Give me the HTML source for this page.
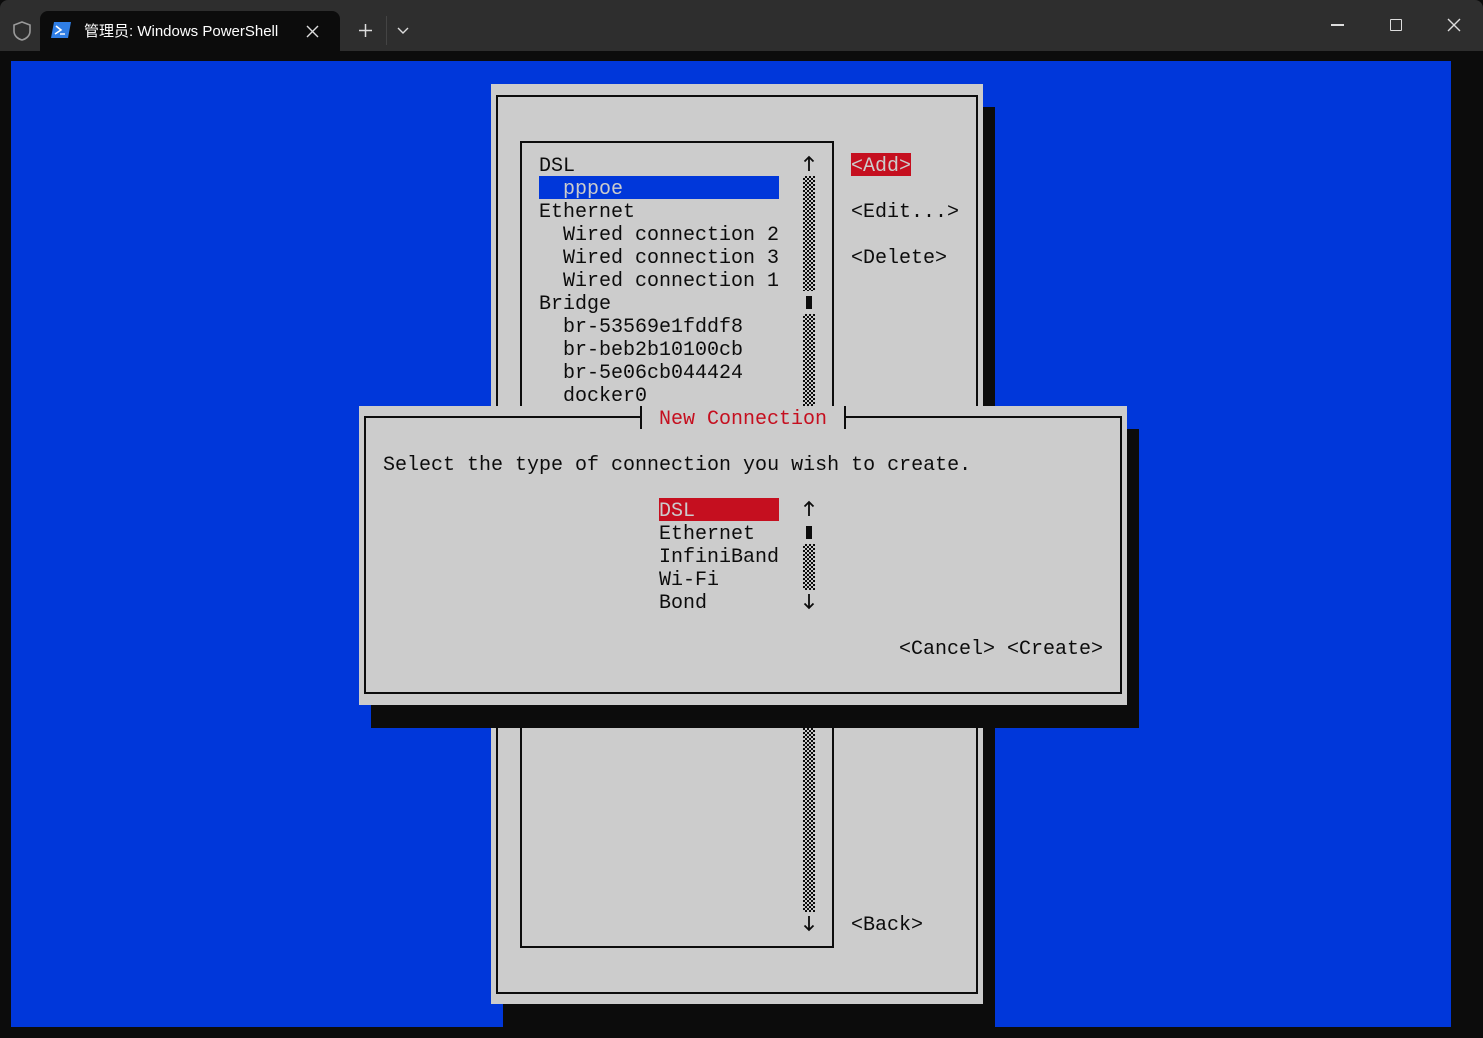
<!DOCTYPE html>
<html><head><meta charset="utf-8">
<style>
*{margin:0;padding:0;box-sizing:border-box}
html,body{width:1483px;height:1038px;overflow:hidden;background:#0c0c0c}
.a{position:absolute}
.t{position:absolute;font-family:"Liberation Mono",monospace;font-size:20px;line-height:23px;height:23px;white-space:pre;color:#0c0c0c;padding-top:2px}
.sh{position:absolute;background:repeating-conic-gradient(#0c0c0c 0 25%,#cccccc 0 50%) 0 0/4px 4px}
.ar{position:absolute;left:803px;width:12px;height:23px}
</style></head><body>
<div class="a" style="left:0;top:0;width:1483px;height:51px;background:#2e2e2e;border-radius:8px 8px 0 0"></div>
<div class="a" style="left:40px;top:11px;width:300px;height:42px;background:#0c0c0c;border-radius:8px 8px 0 0"></div>
<svg class="a" style="left:11px;top:20px" width="22" height="22" viewBox="0 0 22 22"><path d="M11 2 L19 5 V11 C19 16 15 19 11 20 C7 19 3 16 3 11 V5 Z" fill="none" stroke="#9a9a9a" stroke-width="1.6"/></svg>
<svg class="a" style="left:51px;top:22px" width="20" height="16" viewBox="0 0 20 16"><path d="M3 0 H20 L17 16 H0 Z" fill="#2f7ee6"/><path d="M5 4 L10 8 L4 12" fill="none" stroke="#fff" stroke-width="1.6"/><path d="M9 12 H14" stroke="#fff" stroke-width="1.4"/></svg>
<div class="a" style="left:84px;top:22px;font-family:'Liberation Sans','Noto Sans CJK SC',sans-serif;font-size:15px;color:#fff;line-height:20px">管理员: Windows PowerShell</div>
<svg class="a" style="left:306px;top:25px" width="13" height="13" viewBox="0 0 13 13"><path d="M1 1L12 12M12 1L1 12" stroke="#ddd" stroke-width="1.4"/></svg>
<svg class="a" style="left:358px;top:23px" width="15" height="15" viewBox="0 0 15 15"><path d="M7.5 1V14M1 7.5H14" stroke="#ddd" stroke-width="1.5"/></svg>
<div class="a" style="left:386px;top:16px;width:1px;height:29px;background:#444"></div>
<svg class="a" style="left:397px;top:27px" width="12" height="8" viewBox="0 0 12 8"><path d="M1 1L6 6L11 1" fill="none" stroke="#ddd" stroke-width="1.4"/></svg>
<div class="a" style="left:1331px;top:24px;width:13px;height:1.5px;background:#ddd"></div>
<div class="a" style="left:1390px;top:19px;width:12px;height:12px;border:1.5px solid #ddd;border-radius:1px"></div>
<svg class="a" style="left:1447px;top:18px" width="14" height="14" viewBox="0 0 14 14"><path d="M1 1L13 13M13 1L1 13" stroke="#ddd" stroke-width="1.4"/></svg>

<div class="a" style="left:11px;top:61px;width:1440px;height:966px;background:#0037da"></div>

<div class="a" style="left:503px;top:107px;width:492px;height:920px;background:#0c0c0c"></div>
<div class="a" style="left:491px;top:84px;width:492px;height:920px;background:#cccccc"></div>
<div class="a" style="left:496px;top:95px;width:482px;height:899px;border:2px solid #0c0c0c"></div>
<div class="a" style="left:520px;top:141px;width:314px;height:807px;border:2px solid #0c0c0c"></div>

<div class="a" style="left:539px;top:176px;width:240px;height:23px;background:#0037da"></div>
<div class="t" style="left:539px;top:153px">DSL</div>
<div class="t" style="left:539px;top:176px;color:#cccccc">  pppoe</div>
<div class="t" style="left:539px;top:199px">Ethernet</div>
<div class="t" style="left:539px;top:222px">  Wired connection 2</div>
<div class="t" style="left:539px;top:245px">  Wired connection 3</div>
<div class="t" style="left:539px;top:268px">  Wired connection 1</div>
<div class="t" style="left:539px;top:291px">Bridge</div>
<div class="t" style="left:539px;top:314px">  br-53569e1fddf8</div>
<div class="t" style="left:539px;top:337px">  br-beb2b10100cb</div>
<div class="t" style="left:539px;top:360px">  br-5e06cb044424</div>
<div class="t" style="left:539px;top:383px">  docker0</div>

<svg class="ar" style="top:153px" viewBox="0 0 12 23"><path d="M6 4V18M1.5 8.5L6 4L10.5 8.5" fill="none" stroke="#0c0c0c" stroke-width="1.8"/></svg>
<div class="sh" style="left:803px;top:176px;width:12px;height:115px"></div>
<div class="a" style="left:806px;top:296px;width:6px;height:13px;background:#0c0c0c"></div>
<div class="sh" style="left:803px;top:314px;width:12px;height:598px"></div>
<svg class="ar" style="top:912px" viewBox="0 0 12 23"><path d="M6 4V18M1.5 13.5L6 18L10.5 13.5" fill="none" stroke="#0c0c0c" stroke-width="1.8"/></svg>

<div class="a" style="left:851px;top:153px;width:60px;height:23px;background:#c50f1f"></div>
<div class="t" style="left:851px;top:153px;color:#cccccc">&lt;Add&gt;</div>
<div class="t" style="left:851px;top:199px">&lt;Edit...&gt;</div>
<div class="t" style="left:851px;top:245px">&lt;Delete&gt;</div>
<div class="t" style="left:851px;top:912px">&lt;Back&gt;</div>

<div class="a" style="left:371px;top:429px;width:768px;height:299px;background:#0c0c0c"></div>
<div class="a" style="left:359px;top:406px;width:768px;height:299px;background:#cccccc"></div>
<div class="a" style="left:364px;top:416px;width:758px;height:278px;border:2px solid #0c0c0c"></div>
<div class="a" style="left:641px;top:406px;width:216px;height:23px;background:#cccccc"></div>
<div class="a" style="left:640px;top:406px;width:2px;height:23px;background:#0c0c0c"></div>
<div class="a" style="left:630px;top:416px;width:11px;height:2px;background:#0c0c0c"></div>
<div class="a" style="left:844px;top:406px;width:2px;height:23px;background:#0c0c0c"></div>
<div class="a" style="left:845px;top:416px;width:12px;height:2px;background:#0c0c0c"></div>
<div class="t" style="left:659px;top:406px;color:#c50f1f">New Connection</div>

<div class="t" style="left:383px;top:452px">Select the type of connection you wish to create.</div>
<div class="a" style="left:659px;top:498px;width:120px;height:23px;background:#c50f1f"></div>
<div class="t" style="left:659px;top:498px;color:#cccccc">DSL</div>
<div class="t" style="left:659px;top:521px">Ethernet</div>
<div class="t" style="left:659px;top:544px">InfiniBand</div>
<div class="t" style="left:659px;top:567px">Wi-Fi</div>
<div class="t" style="left:659px;top:590px">Bond</div>
<svg class="ar" style="top:498px" viewBox="0 0 12 23"><path d="M6 4V18M1.5 8.5L6 4L10.5 8.5" fill="none" stroke="#0c0c0c" stroke-width="1.8"/></svg>
<div class="a" style="left:806px;top:526px;width:6px;height:13px;background:#0c0c0c"></div>
<div class="sh" style="left:803px;top:544px;width:12px;height:46px"></div>
<svg class="ar" style="top:590px" viewBox="0 0 12 23"><path d="M6 4V18M1.5 13.5L6 18L10.5 13.5" fill="none" stroke="#0c0c0c" stroke-width="1.8"/></svg>
<div class="t" style="left:899px;top:636px">&lt;Cancel&gt; &lt;Create&gt;</div>
</body></html>
